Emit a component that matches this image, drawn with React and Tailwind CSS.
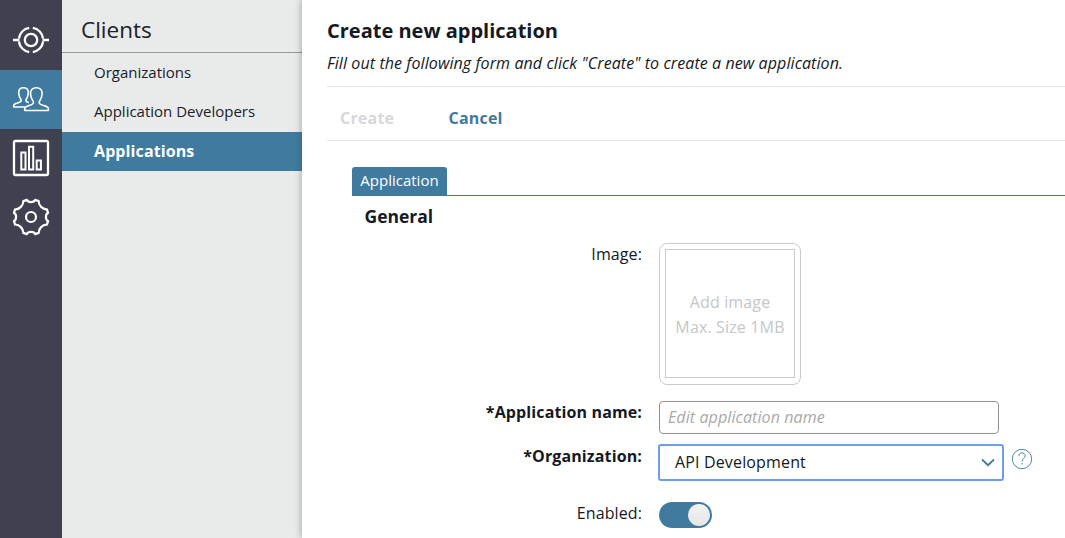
const line = { fill: 'none', stroke: '#fff', strokeWidth: 2 };

function TargetIcon() {
  return (
    <svg width="38" height="30" viewBox="0 0 38 30" {...line}>
      <circle cx="19" cy="15" r="6.2" strokeWidth="2.300" />
      <path strokeWidth="2.300" d="M17.2 2.900A12.2 12.2 0 0 0 6.900 13.500M6.900 16.500A12.2 12.2 0 0 0 17.2 27.100M20.800 27.100A12.2 12.2 0 0 0 31.100 16.500M31.100 13.500A12.2 12.2 0 0 0 20.800 2.900M1 15h6.500M30.500 15H37" />
    </svg>
  );
}

function PeopleIcon() {
  return (
    <svg width="38" height="26" viewBox="0 0 38 26" {...line} strokeWidth="1.600" strokeLinejoin="round">
      <path d="M13.200 21H1.700V19.600C1.700 18 3.200 17.700 5.400 17C7.800 16.200 9.200 15.800 9.200 14.400C9.200 13 6.700 11.400 6.700 6.700C6.700 3.500 8.400 1.700 11.500 1.700C14.600 1.700 16.300 3.500 16.300 6.700C16.300 11.400 13.900 13 13.900 14.400C13.900 15.400 14.800 15.900 16.800 16.500" />
      <path fill="#407b9f" d="M12.700 24.500V22.700C12.700 20.800 14.300 20.400 17 19.500C19.900 18.600 21.500 18 21.500 16.400C21.500 14.700 18.500 12.900 18.500 7.600C18.500 3.800 20.600 1.700 24.300 1.700C28 1.700 30.100 3.800 30.100 7.600C30.100 12.900 27.100 14.700 27.100 16.400C27.100 18 28.700 18.600 31.600 19.500C34.500 20.400 36.400 20.900 36.400 22.700V24.500Z" />
    </svg>
  );
}

function ChartIcon() {
  return (
    <svg width="38" height="38" viewBox="0 0 38 38" {...line}>
      <rect x="2" y="2" width="34" height="34" rx="1.500" strokeWidth="2.300" />
      <path d="M9.300 13.500h4.200v17H9.300zM17 7.800h4.200v22.700H17zM24.700 21.500h4.200v9h-4.200z" />
    </svg>
  );
}

function GearIcon() {
  return (
    <svg width="38" height="38" viewBox="0 0 38 38" {...line} strokeWidth="2.200" strokeLinejoin="round">
      <circle cx="19" cy="19" r="5" />
      <path d="M14.900 1.900C16 4.800 22 4.800 23.100 1.900L26.700 3.100C26.300 7.200 30.800 11.700 34.900 11.300L36.100 14.900C33.200 16 33.200 22 36.100 23.100L34.900 26.700C30.800 26.300 26.300 30.800 26.700 34.900L23.100 36.100C22 33.200 16 33.200 14.900 36.100L11.300 34.900C11.700 30.800 7.200 26.300 3.100 26.700L1.900 23.100C4.800 22 4.800 16 1.900 14.900L3.100 11.300C7.200 11.700 11.700 7.200 11.300 3.100Z" />
    </svg>
  );
}

const rail = 'flex h-[59px] shrink-0 items-center justify-center pb-[2px]';

function Rail() {
  return (
    <nav className="flex w-[62px] shrink-0 flex-col bg-[#3f4151] pt-[11px]">
      <div className={rail}><TargetIcon /></div>
      <div className={`${rail} bg-[#407b9f]`}><PeopleIcon /></div>
      <div className={rail}><ChartIcon /></div>
      <div className={rail}><GearIcon /></div>
    </nav>
  );
}

function Submenu() {
  return (
    <aside className="w-[240px] shrink-0 bg-[#e8ebea] text-[#1c202b]">
      <h1 className="h-[53px] border-b border-[#979999] pl-[19px] pt-[14px] text-[22.5px] leading-[32px]">Clients</h1>
      <ul className="text-[15px] leading-[39px]">
        <li className="h-[39px] pl-8">Organizations</li>
        <li className="h-10 pl-8">Application Developers</li>
        <li className="h-[39px] bg-[#407b9f] pl-8 text-base leading-[39px] font-bold tracking-[0.1px] text-white">Applications</li>
      </ul>
    </aside>
  );
}

function Row({ label, bold, className, children }) {
  return (
    <div className={`flex ${className}`}>
      <label className={`w-[315px] shrink-0 text-right leading-[22px] ${bold ? 'font-bold tracking-[0.12px]' : 'tracking-[0.1px]'}`}>{label}</label>
      <div className="ml-[17px] flex">{children}</div>
    </div>
  );
}

export default function App() {
  return (
    <div className="flex h-[538px] w-[1065px] overflow-hidden bg-white font-['Open_Sans',sans-serif] text-base text-[#151923]">
      <Rail />
      <Submenu />
      <main className="min-w-0 flex-1 bg-white pl-[25px] shadow-[0_0_7px_rgba(50,55,80,0.45)]">
        <header className="h-[87px] border-b border-[#e5e6e7] pt-[17px]">
          <h2 className="text-xl leading-7 font-bold">Create new application</h2>
          <p className="mt-[7px] text-base leading-[22px] tracking-[0.09px] italic">Fill out the following form and click "Create" to create a new application.</p>
        </header>
        <div className="flex h-[54px] items-center border-b border-[#e5e6e7] pt-2 pl-[13px] text-base font-bold tracking-[0.2px]">
          <button className="w-[108.5px] text-left text-[#d6d8db]">Create</button>
          <button className="text-[#407b9f]">Cancel</button>
        </div>
        <section className="pl-[25px]">
          <div className="mt-[26px] flex h-[29px] border-b border-[#407b9f]">
            <div className="h-[29px] w-[95px] rounded-t-[3px] bg-[#407b9f] text-center text-[15px] leading-[27px] text-white">Application</div>
          </div>
          <h3 className="mt-[7px] pl-[12.500px] text-[17.500px] leading-[26px] font-bold">General</h3>
          <div className="-ml-[25px]">
            <Row label="Image:" className="mt-[14px] h-[158px]">
              <div className="flex h-[142px] w-[142px] rounded-[8px] border border-[#c9cbcc] p-[5px]">
                <div className="mb-px flex flex-1 flex-col justify-center border border-[#c9cbcc] pt-[2px] text-center leading-[25px] tracking-[0.15px] whitespace-nowrap text-[#c5c7c9]">
                  <span>Add image</span>
                  <span>Max. Size 1MB</span>
                </div>
              </div>
            </Row>
            <Row label="*Application name:" bold className="h-[43px]">
              <input className="h-[33px] w-[340px] rounded-[4px] border border-[#929494] px-2 pb-[2px] text-base tracking-[0.1px] italic outline-none placeholder:text-[#a9a9a9]" placeholder="Edit application name" />
            </Row>
            <Row label={<span className="block pt-px">*Organization:</span>} bold className="h-[58px]">
              <div className="-ml-px flex h-[37px] w-[346px] items-center justify-between rounded-[3px] border-2 border-[#6d9eeb] pr-[7px] pl-[15px]">
                <span className="pb-[2px] tracking-[0.15px]">API Development</span>
                <svg width="14" height="9" viewBox="0 0 14 9" fill="none" stroke="#407b9f" strokeWidth="1.800"><path d="M1 1.500l6 5.700 6-5.700" /></svg>
              </div>
              <svg className="mt-1 ml-[7px]" width="22" height="22" viewBox="0 0 22 22" fill="none" stroke="#407b9f" strokeWidth="0.900">
                <circle cx="11" cy="11" r="9.700" />
                <path d="M7.900 8c0-4.300 6.300-4.200 6.300-.2 0 2.500-3.100 2.600-3.100 5.600M11.100 15v1.500" />
              </svg>
            </Row>
            <Row label="Enabled:" className="h-[26px]">
              <div className="flex h-[26px] w-[53px] items-center justify-end rounded-full bg-[#407b9f] pr-[2px]">
                <div className="h-[22px] w-[22px] rounded-full bg-linear-to-b from-[#f3f3f3] to-[#e6e6e6]" />
              </div>
            </Row>
          </div>
        </section>
      </main>
    </div>
  );
}
